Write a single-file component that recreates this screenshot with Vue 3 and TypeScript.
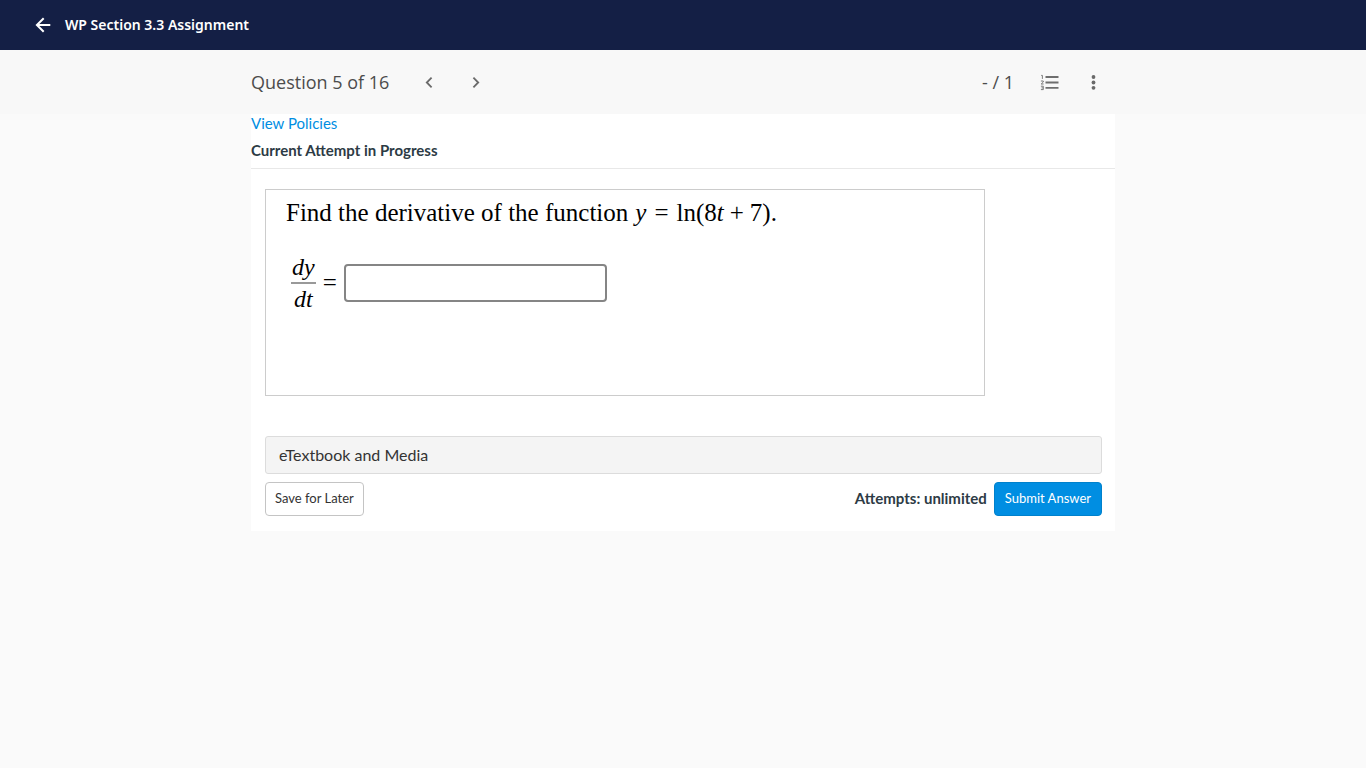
<script setup lang="ts">
import { ref } from 'vue'

const total = 16
const current = ref(5)
const answer = ref('')

function go(step: number): void {
  current.value = Math.min(total, Math.max(1, current.value + step))
}
</script>

<template>
  <div class="page">
    <header class="topbar">
      <button class="icon-btn back" type="button" aria-label="Back">
        <svg width="24" height="24" viewBox="0 0 24 24" fill="none" stroke="#fff" stroke-width="2">
          <path d="M19.300 12H6M12.700 5.200 5.900 12l6.800 6.800" />
        </svg>
      </button>
      <h1>WP Section 3.3 Assignment</h1>
    </header>

    <nav class="subbar" aria-label="Question navigation">
      <div class="subbar-inner">
        <h2>Question {{ current }} of {{ total }}</h2>
        <button class="icon-btn prev" type="button" aria-label="Previous question" @click="go(-1)">
          <svg width="20" height="20" viewBox="0 0 20 20" fill="none" stroke="#6a6a6a" stroke-width="1.8">
            <path d="M12.600 5.700 7.800 10.500l4.800 4.800" />
          </svg>
        </button>
        <button class="icon-btn next" type="button" aria-label="Next question" @click="go(1)">
          <svg width="20" height="20" viewBox="0 0 20 20" fill="none" stroke="#6a6a6a" stroke-width="1.8">
            <path d="M7.400 5.700 12.200 10.500l-4.800 4.800" />
          </svg>
        </button>
        <span class="score">- / 1</span>
        <button class="icon-btn list" type="button" aria-label="Question list">
          <svg width="20" height="20" viewBox="0 0 20 20" fill="none" stroke="#6e6e6e">
            <path d="M5.500 5h13M5.500 10.500h13M5.500 15.800h13" stroke-width="1.8" />
            <path
              d="M1.200 3.400h1.200v3.500M.9 9h2.400v1L1.200 12h2.400M.9 14.200h2.400v3.400H.9M1.500 15.900h1.600"
              stroke-width="0.9"
            />
          </svg>
        </button>
        <button class="icon-btn more" type="button" aria-label="More options">
          <svg width="20" height="20" viewBox="0 0 20 20" fill="#6a6a6a">
            <circle cx="9.500" cy="5" r="1.900" />
            <circle cx="9.500" cy="10.500" r="1.900" />
            <circle cx="9.500" cy="15.800" r="1.900" />
          </svg>
        </button>
      </div>
    </nav>

    <main class="card">
      <a class="policies" href="#policies">View Policies</a>
      <h3>Current Attempt in Progress</h3>

      <form class="body" @submit.prevent>
        <section class="problem">
          <p class="prompt">
            <span>Find the derivative of the function</span>
            <span class="formula">
              <i>y</i><span class="op">=</span><span>ln(8<i>t</i></span><span class="plus">+</span><span>7).</span>
            </span>
          </p>
          <div class="answer">
            <label class="lhs" for="answer">
              <span class="frac"><i class="num">dy</i><i>dt</i></span>
              <span class="eq">=</span>
            </label>
            <input id="answer" v-model="answer" type="text" autocomplete="off" />
          </div>
        </section>

        <button class="media" type="button">eTextbook and Media</button>

        <div class="actions">
          <button class="btn" type="button">Save for Later</button>
          <span class="attempts">Attempts: unlimited</span>
          <button class="btn primary" type="submit">Submit Answer</button>
        </div>
      </form>
    </main>
  </div>
</template>

<style>
body {
  background: #fafafa;
}
</style>

<style scoped>
.page {
  font-family: Lato, "Liberation Sans", sans-serif;
  color: #2d3b45;
}
.page * {
  box-sizing: border-box;
}
h1,
h2,
h3,
p {
  margin: 0;
}
button {
  font-family: inherit;
  cursor: pointer;
}
.icon-btn {
  display: flex;
  padding: 0;
  border: 0;
  background: none;
}
.topbar {
  display: flex;
  align-items: center;
  gap: 10px;
  height: 50px;
  padding: 0 31px;
  background: #141f45;
  color: #fff;
}
.topbar h1 {
  font: 600 14px/20px "Noto Sans", "Open Sans", sans-serif;
}
.subbar {
  background: #f8f8f8;
  color: #4c4c4c;
  font-family: "Open Sans", "Noto Sans", sans-serif;
}
.subbar-inner {
  display: flex;
  align-items: center;
  max-width: 864px;
  height: 64px;
  margin: 0 auto;
  padding-right: 11px;
}
.subbar h2,
.score {
  font-size: 18px;
  font-weight: 400;
  line-height: 24px;
}
.prev {
  margin-left: 30px;
}
.next {
  margin-left: 27px;
}
.score {
  margin-left: auto;
}
.list {
  margin-left: 26px;
}
.more {
  margin-left: 24px;
}
.card {
  max-width: 864px;
  margin: 0 auto;
  background: #fff;
}
.policies {
  display: block;
  width: fit-content;
  color: #008ee2;
  font-size: 15px;
  line-height: 18px;
  text-decoration: none;
}
.card h3 {
  padding: 8px 0 7px;
  border-bottom: 1px solid #e8e8e8;
  font-size: 15px;
  font-weight: 700;
  line-height: 21px;
}
.body {
  padding: 20px 13px 15px 14px;
}
.problem {
  max-width: 720px;
  min-height: 207px;
  padding: 8px 20px;
  border: 1px solid #ccc;
  color: #000;
  font: 25px/30px "Liberation Serif", serif;
}
.prompt {
  display: flex;
  flex-wrap: wrap;
  gap: 7px;
}
.op {
  margin: 0 8px;
}
.plus {
  margin: 0 6px;
}
.answer {
  display: flex;
  align-items: center;
  margin-top: 24px;
}
.lhs {
  display: flex;
  align-items: center;
  padding-left: 5px;
}
.frac {
  display: flex;
  flex-direction: column;
  align-items: center;
  font-size: 24px;
}
.num {
  padding: 0 1px;
  border-bottom: 2px solid #999;
}
.eq {
  margin: 0 7px;
}
.answer input {
  width: 263px;
  height: 38px;
  padding: 0 8px;
  border: 2px solid #858585;
  border-radius: 4px;
  background: #fff;
  font: inherit;
}
.media {
  display: block;
  width: 100%;
  margin-top: 40px;
  padding: 8px 13px;
  border: 1px solid #dcdcdc;
  border-radius: 3px;
  background: #f4f4f4;
  color: #333;
  font-size: 16px;
  line-height: 20px;
  text-align: left;
}
.actions {
  display: flex;
  align-items: center;
  gap: 7px;
  margin-top: 8px;
}
.btn {
  padding: 6px 9px 8px;
  border: 1px solid #c4c4c4;
  border-radius: 4px;
  background: #fff;
  color: #333;
  font-size: 13px;
  line-height: 18px;
}
.primary {
  padding: 6px 10px 8px;
  border-color: #0081cc;
  background: #008ee2;
  color: #fff;
}
.attempts {
  margin-left: auto;
  padding-bottom: 2px;
  font-size: 15px;
  font-weight: 700;
  line-height: 20px;
}
</style>
